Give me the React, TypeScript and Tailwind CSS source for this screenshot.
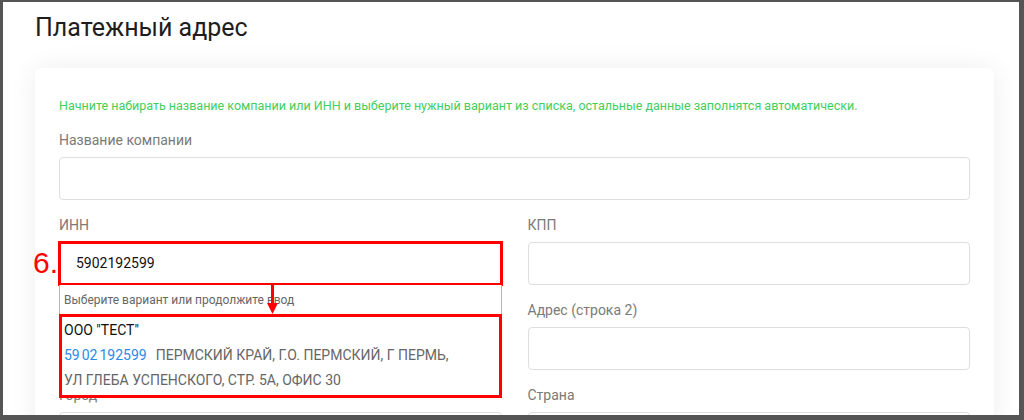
import React from 'react';

const font = { fontFamily: 'Roboto, "Noto Sans", sans-serif' };

function Field({ label, value }: { label: string; value?: string }) {
  return (
    <div className="flex flex-col">
      <label className="text-[14px] leading-4 text-[#7a7a7a] mb-[9px]">{label}</label>
      <div className="h-[43px] rounded-[4px] border border-[#dedede] bg-white px-4 flex items-center text-[14px] text-[#111]">
        {value}
      </div>
    </div>
  );
}

function InnField() {
  return (
    <div className="flex flex-col">
      <label className="text-[14px] leading-4 text-[#7a7a7a] mb-[9px]">ИНН</label>
      <div className="relative">
        <div className="h-[43px] rounded-[4px] border border-[#dedede] bg-white pl-4 flex items-center text-[14px] text-[#111]">
          5902192599
        </div>
        {/* annotation box + step number */}
        <div className="absolute -inset-x-px -top-px -bottom-px border-[3px] border-[#ff0000]" />
        <span
          className="absolute left-[-26px] top-[5px] text-[30px] leading-8 text-[#ff0000]"
          style={{ fontFamily: '"Liberation Sans", Arial, sans-serif' }}
        >
          6.
        </span>

        {/* suggestions dropdown */}
        <div className="absolute left-0 right-0 top-[43px] z-10 bg-white border-x border-[#b5b5b5]">
          <div className="h-[29px] pl-[4px] flex items-center text-[12px] text-[#666]">
            Выберите вариант или продолжите ввод
          </div>
          <div className="relative border-[3px] border-[#ff0000] -mx-px pl-[2px] pt-[1px] pb-[2px] text-[14px] leading-[25px]">
            <div className="text-[#111]">ООО "ТЕСТ"</div>
            <div className="text-[#666]">
              <span className="text-[#2b8ae6]">
                59<span className="ml-[2px]">02</span>
                <span className="ml-[2px]">192599</span>
              </span>
              <span className="ml-[9px]">ПЕРМСКИЙ КРАЙ, Г.О. ПЕРМСКИЙ, Г ПЕРМЬ,</span>
            </div>
            <div className="text-[#666]">УЛ ГЛЕБА УСПЕНСКОГО, СТР. 5А, ОФИС 30</div>
          </div>
          {/* arrow */}
          <div className="absolute left-[211px] top-0 w-[3px] h-[20px] bg-[#ff0000]" />
          <svg className="absolute left-[207px] top-[18px]" width="11" height="11" viewBox="0 0 11 11">
            <polygon points="0,0 11,0 5.5,11" fill="#ff0000" />
          </svg>
        </div>
      </div>
    </div>
  );
}

export default function App() {
  return (
    <div className="h-[420px] w-[1024px] overflow-hidden bg-[#2a2a2a]" style={font}>
      <div className="h-[420px] border-t-2 border-l-[3px] border-r-[5px] border-b-[5px] border-[#555]">
        <div className="h-full overflow-hidden bg-white pl-8 pr-[25px] pt-[10px]">
          <h1 className="text-[25px] leading-8 text-[#1e1e1e] mb-6">Платежный адрес</h1>

          <div className="rounded-[6px] bg-white shadow-[0_0_28px_rgba(0,0,0,0.07)] px-6 pt-[30px] pb-8">
            <p className="text-[12.5px] leading-4 text-[#3fcf5c] mb-[18px]">
              Начните набирать название компании или ИНН и выберите нужный вариант из списка, остальные данные заполнятся автоматически.
            </p>

            <div className="mb-[17px]">
              <Field label="Название компании" />
            </div>

            <div className="grid grid-cols-2 gap-x-[26px] gap-y-[17px]">
              <InnField />
              <Field label="КПП" />
              <Field label="Адрес (строка 1)" />
              <Field label="Адрес (строка 2)" />
              <Field label="Город" />
              <Field label="Страна" />
            </div>
          </div>
        </div>
      </div>
    </div>
  );
}
